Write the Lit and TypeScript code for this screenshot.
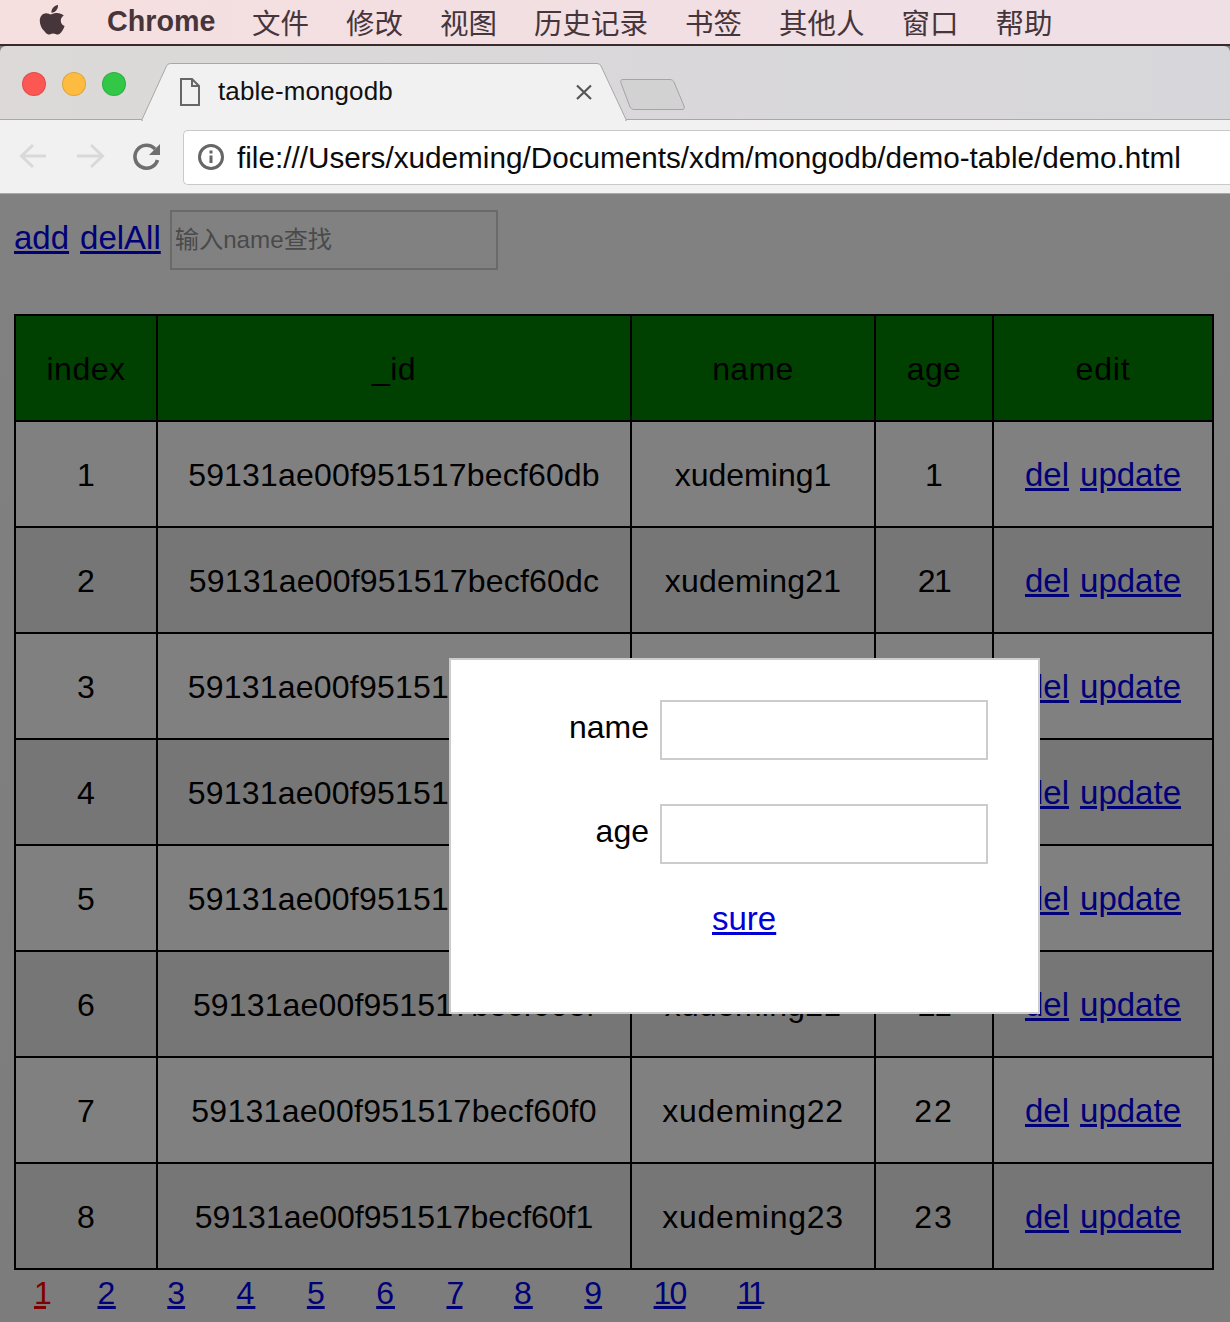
import { LitElement, html, css } from "lit";
import { customElement } from "lit/decorators.js";

type Cell = [string, number];
const rows: { idx: string; id: Cell; name: Cell; age: Cell }[] = [
  { idx: "1", id: ["59131ae00f951517becf60db", 0.17], name: ["xudeming1", 0], age: ["1", 0] },
  { idx: "2", id: ["59131ae00f951517becf60dc", 0.2], name: ["xudeming21", 0.2], age: ["21", -1.5] },
  { idx: "3", id: ["59131ae00f951517becf60dd", 0.2], name: ["xudeming22", 0.7], age: ["22", 2] },
  { idx: "4", id: ["59131ae00f951517becf60de", 0.2], name: ["xudeming23", 0.7], age: ["23", 2] },
  { idx: "5", id: ["59131ae00f951517becf60ee", 0.2], name: ["xudeming24", 0.7], age: ["24", 2] },
  { idx: "6", id: ["59131ae00f951517becf60ef", 0.15], name: ["xudeming21", 0.2], age: ["21", -1.5] },
  { idx: "7", id: ["59131ae00f951517becf60f0", 0.29], name: ["xudeming22", 0.7], age: ["22", 2] },
  { idx: "8", id: ["59131ae00f951517becf60f1", 0], name: ["xudeming23", 0.7], age: ["23", 2] },
];
const heads: Cell[] = [["index", 0.5], ["_id", 0.5], ["name", 0.4], ["age", 0.4], ["edit", 0.8]];
const menus = ["文件", "修改", "视图", "历史记录", "书签", "其他人", "窗口", "帮助"];
const pages: Cell[] = [["1", -5.8], ["2", 0.5], ["3", 0], ["4", 1], ["5", 0], ["6", 1], ["7", -1.8], ["8", 1], ["9", 0], ["10", -1.8], ["11", -4.5]];

const ls = (v: number) => `letter-spacing:${v}px`;

@customElement("app-root")
export class AppRoot extends LitElement {
  static styles = css`
    :host { display: block; position: relative; width: 1230px; height: 1322px; overflow: hidden;
      background: linear-gradient(#828282, #7c7c7c);
      font-family: "Liberation Sans", "Noto Sans CJK SC", sans-serif; color: #000; }
    .menubar { height: 44px; background: linear-gradient(90deg, #f6dfdf, #f1dfe4 60%, #efe0e6);
      border-bottom: 2px solid #3a2a2c; display: flex; align-items: center; color: #46353a; }
    .apple { width: 28px; height: 32px; margin: 0 0 5px 39px; flex: none; }
    .brand { font-weight: 700; margin: 0 0 1px 40px; font-size: 28.7px; width: 108px; flex: none; }
    .menu { margin: 0 0 2px 37px; display: flex; gap: 37px; font-size: 28.5px; }
    .tabstrip { height: 73px; background: linear-gradient(90deg, #dcd9d8, #d7d6da); position: relative;
      border-bottom: 1px solid #a8a8a8; border-radius: 6px 6px 0 0; }
    .tabshape { position: absolute; left: 0; top: 0; width: 700px; height: 75px; }
    .dots { position: absolute; left: 22px; top: 26px; display: flex; gap: 16px; }
    .dot { width: 24px; height: 24px; border-radius: 50%; box-sizing: border-box; border: 1px solid rgba(0,0,0,.12); }
    .red { background: #fc5753; }
    .amber { background: #fdbc40; }
    .green { background: #33c748; }
    .tabtitle { position: absolute; left: 218px; top: 30px; font-size: 26px; letter-spacing: .1px; line-height: 30px; color: #111; }
    .toolbar { height: 73px; background: #f1f1f1; border-bottom: 1px solid #a9a9a9; display: flex; align-items: center; }
    .tb-icons { width: 183px; height: 73px; flex: none; }
    .url { height: 53px; flex: 1; margin-top: 1px; background: #fff; border: 1px solid #c9c9c9; border-right: 0; border-radius: 5px 0 0 5px;
      display: flex; align-items: center; font-size: 29.7px; color: #0b0b0b; }
    .url span { margin-top: 1px; }
    .info { width: 28px; height: 28px; margin: 0 12px 0 13px; flex: none; }
    .page { padding: 16px 14px 0; }
    .top { height: 104px; display: flex; align-items: flex-start; font-size: 33px; }
    .top a { margin-top: 6px; line-height: 44px; margin-right: 11px; }
    .top a + a { margin-right: 9px; }
    a { color: #000078; text-decoration: underline; }
    .search { width: 328px; height: 60px; box-sizing: border-box; border: 2px solid #6a6a6a; padding: 0 3px; font-size: 24.2px; line-height: 56px; color: #4a4a4a; }
    table { border-collapse: collapse; table-layout: fixed; width: 1198px; font-size: 32px; }
    th, td { border: 2px solid #000; height: 106px; padding: 2px 0 0; text-align: center; font-weight: 400; box-sizing: border-box; }
    th { background: #004000; }
    td { background: #808080; }
    tbody tr:nth-child(even) td { background: #767676; }
    td a { font-size: 33px; }
    td a + a { margin-left: 11px; }
    .pager { display: flex; font-size: 32px; line-height: 44px; margin-top: 1px; padding-left: 20px; gap: 51.5px; }
    .pager a.cur { color: #800000; }
    .dialog { position: absolute; left: 449px; top: 658px; width: 591px; height: 356px; box-sizing: border-box; background: #fff; border: 2px solid #ccc; }
    .field { position: absolute; left: 0; display: flex; align-items: flex-start; font-size: 32px; }
    .f1 { top: 40px; }
    .f2 { top: 144px; }
    .field label { width: 198px; text-align: right; line-height: 54px; }
    .field .box { margin-left: 11px; width: 328px; height: 60px; box-sizing: border-box; border: 2px solid #ccc; background: #fff; }
    .sure { position: absolute; left: 261px; top: 237px; font-size: 33px; line-height: 44px; color: #0000d8; }
  `;

  render() {
    return html`
      <div class="menubar">
        <svg class="apple" viewBox="0 0 28 32"><path fill="#46353a" d="M19 1c.2 2.400-.8 4.200-1.900 5.500-1.200 1.400-2.900 2.400-4.700 2.200-.2-2 .8-4 1.900-5.200C15.500 2.200 17.400 1.200 19 1zM24.800 11.600c-1.900 1.200-3 3-3 5.100 0 2.500 1.500 4.400 3.800 5.400-.6 1.800-1.500 3.500-2.600 5.100-1.300 1.800-2.500 3.300-4.300 3.300-1.900 0-2.400-1.100-4.500-1.100-2.200 0-2.800 1.100-4.600 1.100-1.800.1-3.100-1.700-4.300-3.400C2.300 24.400.8 20 .8 16.900c0-5 3.200-7.700 6.400-7.700 1.900 0 3.500 1.200 4.700 1.200 1.100 0 2.900-1.300 5.100-1.300 1.100 0 4.900.1 7.800 2.500z"/></svg>
        <span class="brand">Chrome</span>
        <div class="menu">${menus.map((m) => html`<span>${m}</span>`)}</div>
      </div>
      <div class="tabstrip">
        <svg class="tabshape" viewBox="0 0 700 75">
          <path d="M142 73.500L166.500 20Q167.500 17.500 170.500 17.500H597Q600 17.500 601 20L626 73.500V75H142Z" fill="#f1f1f1" stroke="#a8a8a8"/>
          <path d="M143 73.500H625V75H143Z" fill="#f1f1f1"/>
          <path d="M623 33.500H670C672 33.500 673 34.500 674 36L684 60C685 62 684 63.500 682 63.500H634C632 63.500 631 62.500 630 61L621 37C620 35 621 33.500 623 33.500Z" fill="#d2d2d2" stroke="#a4a4a4"/>
          <path d="M181 33H192L199 40V59H181Z M192 33V40H199" fill="none" stroke="#666" stroke-width="2"/>
          <path d="M577 39.500L591 53M591 39.500L577 53" stroke="#555" stroke-width="2.200" fill="none"/>
        </svg>
        <div class="dots">
          <div class="dot red"></div>
          <div class="dot amber"></div>
          <div class="dot green"></div>
        </div>
        <div class="tabtitle">table-mongodb</div>
      </div>
      <div class="toolbar">
        <svg class="tb-icons" viewBox="0 0 183 73">
          <path d="M46 36H22M33 25L21.500 36L33 47" fill="none" stroke="#d9d9d9" stroke-width="3"/>
          <path d="M77 36H102M91 25L102.500 36L91 47" fill="none" stroke="#d9d9d9" stroke-width="3"/>
          <path d="M155 29A11.500 11.500 0 1 0 157.500 40" fill="none" stroke="#6e6e6e" stroke-width="3.600"/>
          <path d="M149 35H160V24Z" fill="#6e6e6e"/>
        </svg>
        <div class="url">
          <svg class="info" viewBox="0 0 28 28"><circle cx="14" cy="14" r="11.500" fill="none" stroke="#666" stroke-width="3"/><rect x="12.500" y="12.500" width="3" height="7.500" fill="#666"/><rect x="12.500" y="7.500" width="3" height="3" fill="#666"/></svg>
          <span>file:///Users/xudeming/Documents/xdm/mongodb/demo-table/demo.html</span>
        </div>
      </div>
      <div class="page">
        <div class="top">
          <a>add</a><a>delAll</a>
          <div class="search">输入name查找</div>
        </div>
        <table>
          <colgroup><col style="width:142px"/><col style="width:474px"/><col style="width:244px"/><col style="width:118px"/><col style="width:220px"/></colgroup>
          <thead><tr>${heads.map(([t, v]) => html`<th style=${ls(v)}>${t}</th>`)}</tr></thead>
          <tbody>
            ${rows.map((r) => html`<tr>
              <td>${r.idx}</td>
              <td style=${ls(r.id[1])}>${r.id[0]}</td>
              <td style=${ls(r.name[1])}>${r.name[0]}</td>
              <td style=${ls(r.age[1])}>${r.age[0]}</td>
              <td><a>del</a><a>update</a></td>
            </tr>`)}
          </tbody>
        </table>
        <div class="pager">${pages.map(([p, v], i) => html`<a class=${i === 0 ? "cur" : ""} style=${ls(v)}>${p}</a>`)}</div>
      </div>
      <div class="dialog">
        <div class="field f1"><label>name</label><div class="box"></div></div>
        <div class="field f2"><label>age</label><div class="box"></div></div>
        <a class="sure">sure</a>
      </div>
    `;
  }
}
